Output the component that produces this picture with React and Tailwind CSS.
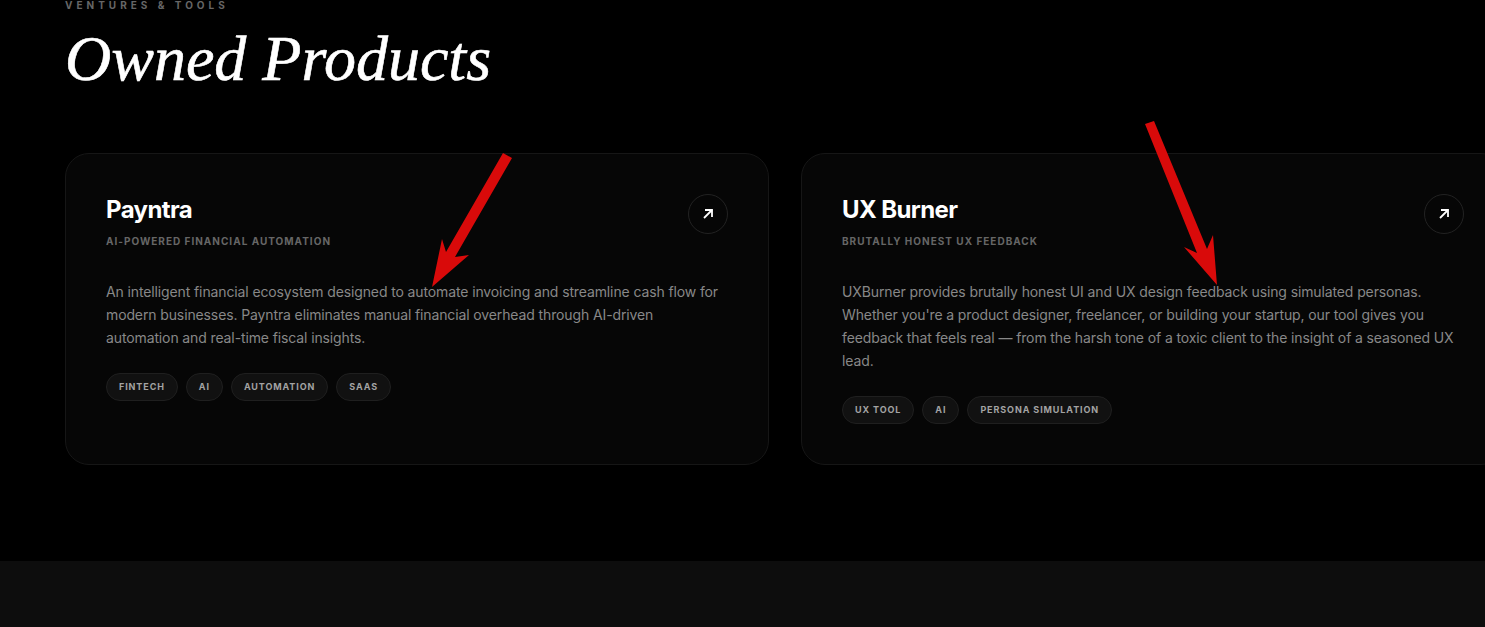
import React from 'react'

const products = [
  {
    name: 'Payntra',
    tagline: 'AI-Powered Financial Automation',
    text: 'An intelligent financial ecosystem designed to automate invoicing and streamline cash flow for modern businesses. Payntra eliminates manual financial overhead through AI-driven automation and real-time fiscal insights.',
    tags: ['Fintech', 'AI', 'Automation', 'SaaS'],
  },
  {
    name: 'UX Burner',
    tagline: 'Brutally Honest UX Feedback',
    text: "UXBurner provides brutally honest UI and UX design feedback using simulated personas. Whether you're a product designer, freelancer, or building your startup, our tool gives you feedback that feels real — from the harsh tone of a toxic client to the insight of a seasoned UX lead.",
    tags: ['UX Tool', 'AI', 'Persona Simulation'],
  },
]

function ProductCard({ product }) {
  return (
    <div className="h-[312px] rounded-[24px] border border-[#161616] bg-[#060606] p-10">
      <div className="flex items-start justify-between">
        <div>
          <h3 className="text-2xl leading-8 font-bold tracking-[-0.025em] text-white">{product.name}</h3>
          <p className="mt-2 text-[10px] leading-[15px] font-bold uppercase tracking-[0.1em] text-[#666666]">
            {product.tagline}
          </p>
        </div>
        <div className="flex h-10 w-10 items-center justify-center rounded-full border border-[#222222]">
          <svg className="h-6 w-6 text-white" viewBox="0 0 24 24" fill="none" stroke="currentColor" strokeWidth="1.8">
            <path d="M8 16 16 8" />
            <path d="M9 8h7v7" />
          </svg>
        </div>
      </div>
      <p className="mt-[31px] text-sm leading-[23px] tracking-[-0.12px] text-[#888888]">{product.text}</p>
      <div className="mt-6 flex gap-2">
        {product.tags.map((tag) => (
          <span
            key={tag}
            className="flex h-7 items-center rounded-full border border-[#1f1f1f] bg-[#111111] px-3 text-[9px] font-bold uppercase tracking-[0.1em] text-[#a3a3a3]"
          >
            {tag}
          </span>
        ))}
      </div>
    </div>
  )
}

export default function App() {
  return (
    <div className="relative h-[627px] w-[1485px] overflow-hidden bg-black font-['Inter',sans-serif]">
      <section className="h-[561px] pl-[65px]">
        <p className="text-[10px] leading-[11px] font-bold uppercase tracking-[0.4em] text-[#666666]">
          Ventures &amp; Tools
        </p>
        <h2 className="mt-3 font-['Liberation_Serif',serif] text-[64px] leading-[72px] text-white italic [-webkit-text-stroke:0.6px_white]">
          Owned Products
        </h2>
        <div className="mt-[58px] grid w-[1440px] grid-cols-2 gap-8">
          {products.map((product) => (
            <ProductCard key={product.name} product={product} />
          ))}
        </div>
      </section>
      <div className="h-[66px] bg-[#0d0d0d]" />

      {/* Red annotation arrows drawn over the page */}
      <svg className="pointer-events-none absolute inset-0" width="1485" height="627" fill="#d90a0a">
        <polygon points="503,153 512,158 455,257 469,255 432,287 442,239 446,252" />
        <polygon points="1145,124 1154,121 1207,249 1213,235 1217,285 1184,247 1197,253" />
      </svg>
    </div>
  )
}
